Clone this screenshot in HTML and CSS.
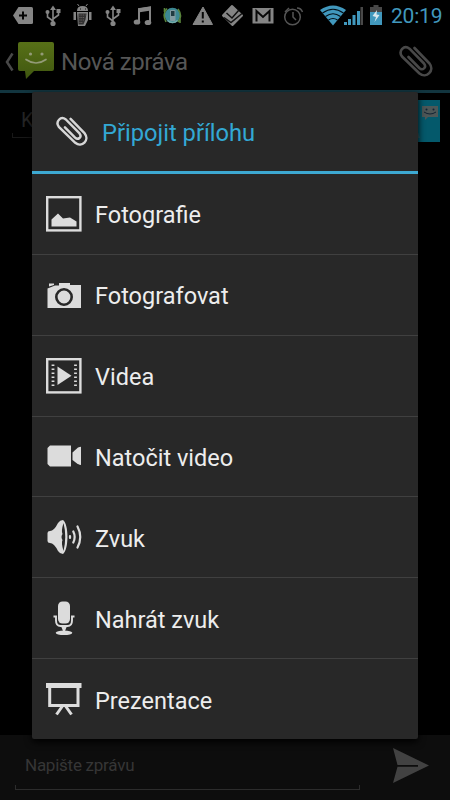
FILE: index.html
```html
<!DOCTYPE html>
<html lang="cs">
<head>
<meta charset="utf-8">
<title>Nová zpráva</title>
<link rel="stylesheet" href="styles.css">
</head>
<body>
<svg class="defs" width="0" height="0">
  <symbol id="usb" viewBox="0 0 30 30"><g fill="none" stroke="#858585" stroke-width="1.6"><path d="M15 8V24M15 21L9.500 17V12M15 19L20.500 15V11"/></g><g fill="#858585"><path d="M12 10L15 5.500L18 10Z"/><circle cx="15" cy="23.500" r="2.600"/><circle cx="9.500" cy="12" r="2"/><path d="M18.500 9h4v4h-4z"/></g></symbol>
  <symbol id="clip" viewBox="0 0 34 34"><path d="M15.500 3L30.500 18.500C36 25.500 27.500 34 20.500 28.500L3 11.500C-1 6 5 -0.500 10.500 3.700L25 18.500C28 22.500 23.500 26 20.300 23L9.500 12" fill="none" stroke="currentColor" stroke-width="2.600" stroke-linecap="round" stroke-linejoin="round"/></symbol>
</svg>
<div class="screen">
  <header class="status">
    <svg class="slot" viewBox="0 0 30 30"><path d="M5 15.500L10.500 7H23.500Q25 7 25 8.500V22.500Q25 24 23.500 24H10.500Z" fill="#858585"/><path d="M15 11.500V19.500M11 15.500H19" stroke="#050505" stroke-width="2"/></svg>
    <svg class="slot"><use href="#usb"/></svg>
    <svg class="slot" viewBox="0 0 30 30"><g fill="#858585"><path d="M9 11Q9 6 14.500 6T20 11Z"/><path d="M5.500 12h2.500v8H5.500zM21 12h2.500v8H21zM9 12h11v8l-3 6H10z"/></g><path d="M11 6L9.500 4M18 6L19.500 4" stroke="#858585"/><path d="M10.500 13.500h8l-1 6-2 5h-5z" fill="#303030"/><path d="M11.500 15h6M11.500 17.500h5M11.500 20h4.500M11.500 22.500h3" stroke="#7a7070" stroke-width="0.800" stroke-dasharray="1 0.800"/><path d="M12 9h1M17 9h1" stroke="#111"/></svg>
    <svg class="slot"><use href="#usb"/></svg>
    <svg class="slot" viewBox="0 0 30 30"><path d="M11 22V9L22 7.500V22" fill="none" stroke="#858585" stroke-width="2"/><path d="M10 8.500L23 6.500V10.500L10 12.500Z" fill="#858585"/><ellipse cx="9" cy="22" rx="3.300" ry="2.600" fill="#858585"/><ellipse cx="20" cy="22.500" rx="3.300" ry="2.600" fill="#858585"/></svg>
    <svg class="slot" viewBox="0 0 30 30"><circle cx="14.500" cy="15.500" r="7.800" fill="#3c8792"/><path d="M8 22Q4 14 9 8.500M20 9Q25 16 20 22M6.500 8v4M22 19v4" stroke="#59843b" stroke-width="1.600" fill="none"/><path d="M9.500 20.500q5 4 10 0" stroke="#75aaa9" stroke-width="1.500" fill="none"/><rect x="12" y="10" width="5.500" height="11" rx="1" fill="#829aa0"/><rect x="13" y="11" width="3.500" height="5" fill="#203a40"/></svg>
    <svg class="slot" viewBox="0 0 30 30"><path d="M15 7L24.500 24.500H5Z" fill="#858585" stroke="#858585" stroke-linejoin="round"/><path d="M14.800 12V18.500M14.800 20.500V22.500" stroke="#080808" stroke-width="2"/></svg>
    <svg class="slot" viewBox="0 0 30 30"><path d="M14 6L24 15.500L14.500 25L5 15.500Z" fill="#858585" stroke="#858585" stroke-width="2" stroke-linejoin="round"/><path d="M8.500 13L14 18L21 10M6 17.500L13 22.500L24 13.500" fill="none" stroke="#111" stroke-width="1.500"/></svg>
    <svg class="slot" viewBox="0 0 30 30"><rect x="4.500" y="8" width="21" height="15.500" fill="#858585"/><path d="M8.500 21.500V11L15 17L21.500 11V21.500" fill="none" stroke="#080808" stroke-width="2"/></svg>
    <svg class="slot" viewBox="0 0 30 30"><g fill="none" stroke="#555" stroke-width="1.500"><circle cx="14.500" cy="17" r="7.800"/><path d="M15 12V17L18 20M7 12L11 8M19 8q4 0 5.500 4"/></g></svg>
    <svg class="radio" viewBox="0 0 46 30"><path d="M1 10Q14 1 27 10L14 25.500Z" fill="#4198bd"/><path d="M3.500 13Q14 5.500 24.500 13M6.500 16.500Q14 11 21.500 16.500M9.500 20Q14 17 18.500 20" fill="none" stroke="#031018" stroke-width="1.200"/><path d="M25 22h3v3h-3zM29 19h3v6h-3zM33.500 15h3v10h-3zM38 11h3v14h-3z" fill="#4198bd"/><path d="M41.500 7h2.500v18h-2.500z" fill="#484848"/></svg>
    <svg class="battery" viewBox="0 0 14 30"><path d="M1 7h3.500V5h5v2H13v18H1z" fill="#484848"/><path d="M1 12h12v13H1z" fill="#4198bd"/><path d="M8 10L3.500 16L7 17L5.500 22L10.500 15L7.500 14.500Z" fill="#d8e7ed"/></svg>
    <span class="time">20:19</span>
  </header>
  <div class="actionbar">
    <svg class="back" viewBox="0 0 10 20"><path d="M8.500 1.500L3 10L8.500 18.500" fill="none" stroke="#484848" stroke-width="2.500"/></svg>
    <svg class="app" viewBox="0 0 36 40"><defs><linearGradient id="lime" x1="0" y1="0" x2="0" y2="1"><stop offset="0" stop-color="#577017"/><stop offset="1" stop-color="#405710"/></linearGradient></defs><path d="M2 0H34Q36 0 36 2V27Q36 29 34 29H16L8 37L7 29H2Q0 29 0 27V2Q0 0 2 0Z" fill="url(#lime)"/><circle cx="12.500" cy="12" r="1.600" fill="#939b78"/><circle cx="24" cy="12" r="1.600" fill="#939b78"/><path d="M8 17.500Q18 24.500 28 17.500" fill="none" stroke="#939b78" stroke-width="1.700" stroke-linecap="round"/></svg>
    <h1 class="title">Nová zpráva</h1>
    <svg class="attach"><use href="#clip"/></svg>
  </div>
  <div class="recipient">
    <span class="to">K</span>
    <svg class="contact" viewBox="0 0 34 42"><path d="M0 0h34v42H0z" fill="#04596b"/><path d="M0 26q11-1 14 12H0z" fill="#285b65"/><path d="M16 6h16v11H22l-3 3v-3h-3z" fill="#4d5757"/><circle cx="20.500" cy="9.500" r="1" fill="#123"/><circle cx="27.500" cy="9.500" r="1" fill="#123"/><path d="M18 12q6 4 12 0" fill="none" stroke="#123"/></svg>
  </div>
  <footer class="compose">
    <div class="field">Napište zprávu</div>
    <svg class="send" viewBox="0 0 36 36"><path d="M0 0L36 17.500L0 35L4.500 18.800H25V17H4.500Z" fill="#424242"/></svg>
  </footer>
  <main class="dialog">
    <div class="heading"><svg class="headicon"><use href="#clip"/></svg><h2>Připojit přílohu</h2></div>
    <ul class="list">
      <li><svg viewBox="0 0 36 36"><rect x="1.200" y="1.200" width="33.200" height="33.200" fill="none" stroke="#dcdcdc" stroke-width="2.400"/><path d="M5.500 30.500V23.500L12 17.500L17 22.500L24 21.500L30.500 25.500V30.500Z" fill="#dcdcdc"/></svg><span>Fotografie</span></li>
      <li><svg viewBox="0 0 36 36"><path d="M1.500 11.500L9 8.500H13V6H24V8H35V31H1.500ZM3 6.500H8V8L3 9.500Z" fill="#dcdcdc"/><circle cx="18" cy="20" r="7.700" fill="none" stroke="#282828" stroke-width="2.600"/></svg><span>Fotografovat</span></li>
      <li><svg viewBox="0 0 36 36"><rect x="1.200" y="1.200" width="33.200" height="33.200" fill="none" stroke="#dcdcdc" stroke-width="2.400"/><path d="M11.500 8.500V27L25.500 17.700Z" fill="#dcdcdc"/><path d="M7 6.500V30M29.500 6.500V30" stroke="#dcdcdc" stroke-width="2.800" stroke-dasharray="1.400 2.600"/></svg><span>Videa</span></li>
      <li><svg viewBox="0 0 36 36"><path d="M4 7.500H25V28.500H4L1.500 26V10Z" fill="#dcdcdc"/><path d="M26.500 14.500L32 9.500Q35 8.500 35 9V27Q34 27 31 25.500L26.500 22Z" fill="#dcdcdc"/></svg><span>Natočit video</span></li>
      <li><svg viewBox="0 0 36 36"><path d="M1.500 14Q1.500 12 4 12Q8 12 12 4Q14 1 17 1C23 5 23 31 17 35Q14 35 12 32Q8 24 4 24Q1.500 24 1.500 22Z" fill="#dcdcdc"/><path d="M17.500 4Q15 12 16.500 15Q14.500 18 16.500 21Q15 24 17.500 32Q21 17.500 17.500 4Z" fill="#282828"/><path d="M24 17v2M27.300 12.500Q30 18 27.300 23.500M31.500 7.500Q37 18 31.500 28.500" fill="none" stroke="#dcdcdc" stroke-width="2.200" stroke-linecap="round"/></svg><span>Zvuk</span></li>
      <li><svg viewBox="0 0 36 36"><rect x="12" y="1.500" width="12" height="22" rx="4.500" fill="#dcdcdc"/><path d="M7.500 16.500h2.500v4Q10 26 14.500 26h7Q26 26 26 20.500v-4h2.500M18 26v6" fill="none" stroke="#dcdcdc" stroke-width="1.900"/><ellipse cx="18" cy="32.800" rx="8.300" ry="2.300" fill="#dcdcdc"/><path d="M15 26h6l-2 5h-2z" fill="#dcdcdc"/></svg><span>Nahrát zvuk</span></li>
      <li><svg viewBox="0 0 36 36"><path d="M0 2h35.500v5H0z" fill="#dcdcdc"/><path d="M3.700 6V24.500H32V6M16.500 25L10.500 33.500M19.500 25L25.500 33.500" fill="none" stroke="#dcdcdc" stroke-width="3"/></svg><span>Prezentace</span></li>
    </ul>
  </main>
</div>
</body>
</html>
```
FILE: styles.css
```css
* { box-sizing: border-box; }
body { margin: 0; background: #000; font-family: Roboto, sans-serif; }
.defs { position: absolute; }
svg { display: block; flex: none; }
.screen { position: relative; width: 450px; height: 800px; overflow: hidden; display: flex; flex-direction: column; background: #000; }
.status { height: 33px; padding-left: 8px; display: flex; }
.slot { width: 30px; height: 30px; }
.radio { width: 46px; height: 30px; margin-left: 11px; }
.battery { width: 14px; height: 30px; margin-left: 4px; }
.time { margin-left: 8px; font-size: 21px; line-height: 33px; letter-spacing: -0.2px; color: #4198bd; white-space: nowrap; }
.actionbar { height: 60px; border-bottom: 3px solid #12353f; display: flex; align-items: center; padding-left: 4px; }
.back { width: 10px; height: 20px; }
.app { width: 36px; height: 40px; margin-left: 4px; }
.title { flex: 1; margin: 0 0 0 7px; font-size: 24px; line-height: 30px; letter-spacing: -0.45px; font-weight: 400; color: #565656; }
.attach { width: 34px; height: 34px; margin-right: 17px; color: #484848; }
.recipient { display: flex; justify-content: space-between; padding: 7px 10px 0 12px; }
.to { width: 300px; height: 38px; padding: 8px 0 0 9px; background: linear-gradient(#181818, #181818) bottom/100% 1px no-repeat, linear-gradient(#181818, #181818) left bottom/1px 5px no-repeat; color: #252525; font-size: 20px; line-height: 24px; }
.contact { width: 34px; height: 42px; }
.compose { height: 65px; margin-top: auto; background: #0d0d0d; display: flex; padding: 14px 21px 10px 15px; justify-content: space-between; }
.field { width: 345px; height: 41px; padding-left: 10px; font-size: 17px; line-height: 32px; letter-spacing: -0.25px; color: #363636; background: linear-gradient(#2c2c2c, #2c2c2c) bottom/100% 1px no-repeat, linear-gradient(#2c2c2c, #2c2c2c) left bottom/1px 5px no-repeat, linear-gradient(#2c2c2c, #2c2c2c) right bottom/1px 5px no-repeat; }
.send { width: 36px; height: 36px; margin-top: -1px; }
.dialog { position: absolute; left: 32px; top: 92px; width: 386px; height: 647px; background: #282828; border-radius: 2px; box-shadow: 0 3px 7px #000; }
.heading { height: 82px; padding-left: 24px; display: flex; align-items: center; border-bottom: 3px solid #3da9d2; }
.headicon { width: 32px; height: 32px; color: #d6d6d6; }
h2 { margin: 3px 0 0 14px; font-size: 23.7px; line-height: 28px; font-weight: 400; color: #33a8d5; }
.list { list-style: none; margin: 0; padding: 0; }
.list li { height: 80.85px; display: flex; align-items: center; padding-left: 14px; border-bottom: 1px solid #404040; color: #ededed; font-size: 23.5px; }
.list li:last-child { border-bottom: 0; height: 80px; }
.list svg { width: 36px; height: 36px; }
.list span { margin: 3px 0 0 13px; line-height: 28px; }
```
